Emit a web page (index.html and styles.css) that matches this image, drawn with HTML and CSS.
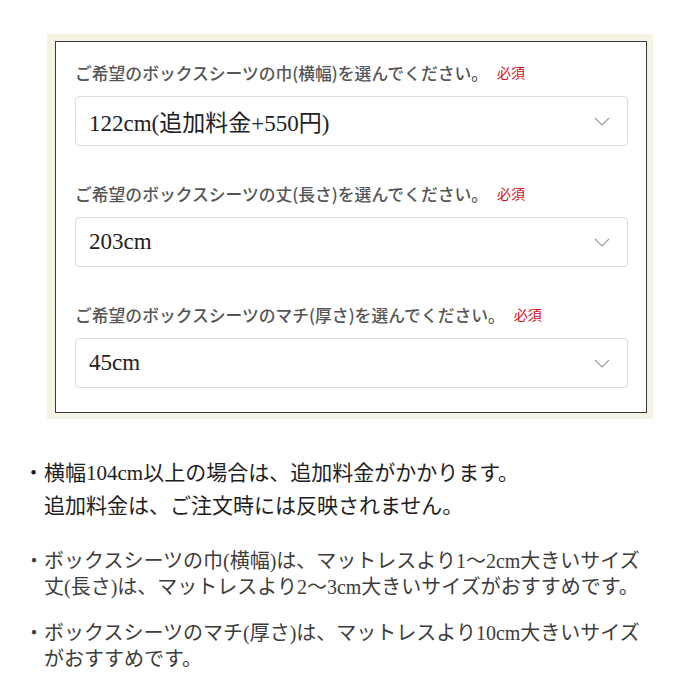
FILE: index.html
```html
<!DOCTYPE html>
<html lang="ja">
<head>
<meta charset="utf-8">
<title>ボックスシーツ サイズ選択</title>
<link rel="stylesheet" href="styles.css">
</head>
<body>
  <div class="options-frame">
    <div class="options">
      <div class="field">
        <div class="field-label">ご希望のボックスシーツの巾(横幅)を選んでください。<span class="required">必須</span></div>
        <div class="select">
          <span class="select-value">122cm(追加料金+550円)</span>
          <svg class="chevron" width="16" height="9" viewBox="0 0 16 9"><polyline points="1,1 8,8 15,1" fill="none" stroke="#9a9a9a" stroke-width="1.1"/></svg>
        </div>
      </div>
      <div class="field">
        <div class="field-label">ご希望のボックスシーツの丈(長さ)を選んでください。<span class="required">必須</span></div>
        <div class="select">
          <span class="select-value">203cm</span>
          <svg class="chevron" width="16" height="9" viewBox="0 0 16 9"><polyline points="1,1 8,8 15,1" fill="none" stroke="#9a9a9a" stroke-width="1.1"/></svg>
        </div>
      </div>
      <div class="field">
        <div class="field-label">ご希望のボックスシーツのマチ(厚さ)を選んでください。<span class="required">必須</span></div>
        <div class="select">
          <span class="select-value">45cm</span>
          <svg class="chevron" width="16" height="9" viewBox="0 0 16 9"><polyline points="1,1 8,8 15,1" fill="none" stroke="#9a9a9a" stroke-width="1.1"/></svg>
        </div>
      </div>
    </div>
  </div>

  <div class="notes">
    <p class="note note-main">・横幅104cm以上の場合は、追加料金がかかります。<br>追加料金は、ご注文時には反映されません。</p>
    <p class="note note-sub">・ボックスシーツの巾(横幅)は、マットレスより1～2cm大きいサイズ<br>丈(長さ)は、マットレスより2～3cm大きいサイズがおすすめです。</p>
    <p class="note note-sub">・ボックスシーツのマチ(厚さ)は、マットレスより10cm大きいサイズ<br>がおすすめです。</p>
  </div>
</body>
</html>
```

FILE: styles.css
```css
html, body {
  margin: 0;
  padding: 0;
  background: #fff;
}

body {
  width: 700px;
  font-family: "Liberation Serif", "Noto Sans CJK JP", serif;
}

/* beige frame around the option box */
.options-frame {
  margin: 34px 0 0 47px;
  width: 606px;
  box-sizing: border-box;
  padding: 7px 6px 6px 8px;
  background: #f5f3e3;
}

.options {
  background: #fff;
  border: 1px solid #3a3a3a;
  padding: 18px 18px 24px 19px;
  display: flex;
  flex-direction: column;
  gap: 35px;
}

.field {
  display: flex;
  flex-direction: column;
  gap: 11px;
}

.field-label {
  font-family: "Noto Sans CJK JP", sans-serif;
  font-size: 16.8px;
  font-weight: 500;
  line-height: 24px;
  color: #555;
  white-space: nowrap;
}

.required {
  margin-left: 9px;
  font-size: 14px;
  font-weight: 400;
  color: #d2111c;
  vertical-align: 2px;
}

.select {
  height: 50px;
  box-sizing: border-box;
  border: 1px solid #dcdcdc;
  border-radius: 4px;
  background: #fff;
  display: flex;
  align-items: center;
  justify-content: space-between;
  padding: 0 17px 0 13px;
}

.select-value {
  font-family: "Liberation Serif", "Noto Sans CJK JP", serif;
  font-size: 23px;
  color: #222;
}

.chevron {
  display: block;
}

/* notes below the options */
.notes {
  margin-top: 38px;
}

.note {
  margin: 0;
  padding-left: 44px;
  white-space: nowrap;
}

.note-main {
  font-size: 21px;
  line-height: 33px;
  text-indent: -21px;
  color: #1e1e1e;
}

.note-sub {
  font-size: 20px;
  line-height: 26px;
  text-indent: -20px;
  color: #3c3c3c;
}

.note-main + .note-sub {
  margin-top: 25px;
}

.note-sub + .note-sub {
  margin-top: 20px;
}
```
